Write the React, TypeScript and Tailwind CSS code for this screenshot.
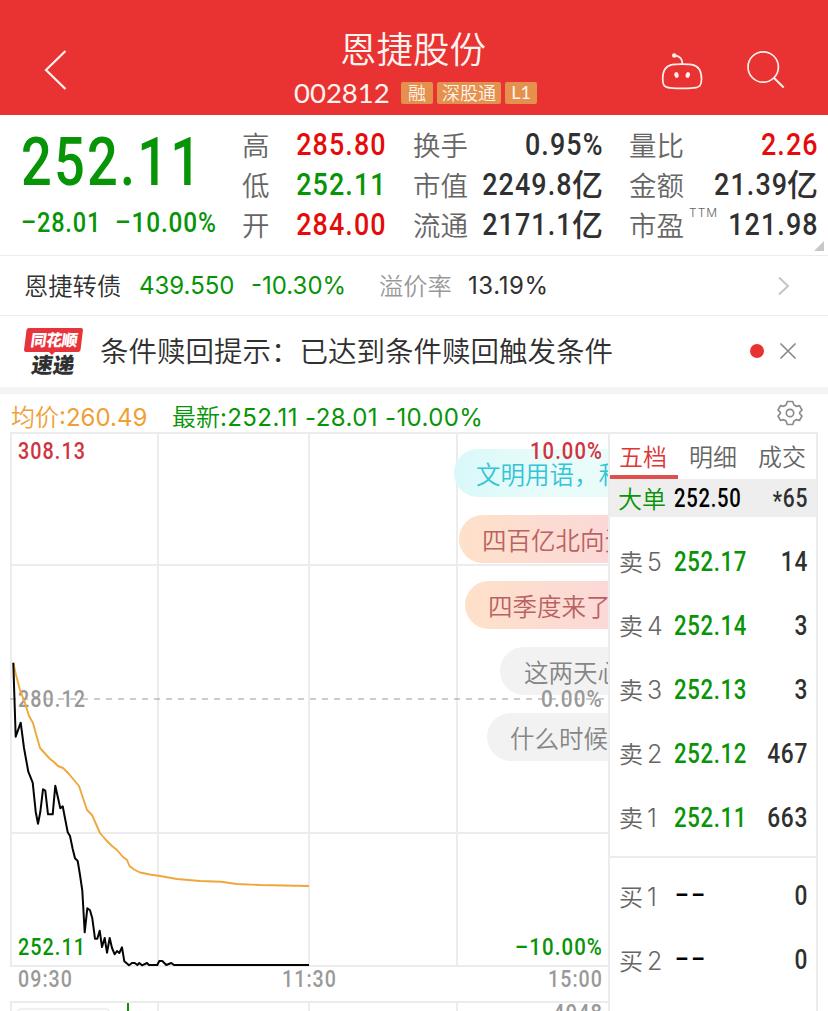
import clsx from "clsx";
import type { ReactNode } from "react";

const quoteColumns = [
  {
    className: "w-[144px]",
    rows: [
      { label: "高", value: "285.80", color: "text-[#e60b0b]" },
      { label: "低", value: "252.11", color: "text-[#079407]" },
      { label: "开", value: "284.00", color: "text-[#e60b0b]" },
    ],
  },
  {
    className: "ml-[27px] w-[190px]",
    rows: [
      { label: "换手", value: "0.95%", color: "text-[#303030]" },
      { label: "市值", value: "2249.8", unit: "亿", color: "text-[#303030]" },
      { label: "流通", value: "2171.1", unit: "亿", color: "text-[#303030]" },
    ],
  },
  {
    className: "ml-[26px] w-[189px]",
    rows: [
      { label: "量比", value: "2.26", color: "text-[#e60b0b]" },
      { label: "金额", value: "21.39", unit: "亿", color: "text-[#303030]" },
      { label: "市盈", sup: "TTM", value: "121.98", color: "text-[#303030]" },
    ],
  },
];

const asks = [
  { level: "5", price: "252.17", volume: "14" },
  { level: "4", price: "252.14", volume: "3" },
  { level: "3", price: "252.13", volume: "3" },
  { level: "2", price: "252.12", volume: "467" },
  { level: "1", price: "252.11", volume: "663" },
];

const bids = [
  { level: "1", volume: "0" },
  { level: "2", volume: "0" },
];

const comments = [
  {
    text: "文明用语，和谐交流",
    className:
      "ml-[444px] pl-[22px] bg-linear-to-r from-[#d9f8fa] to-[#eafcfa] to-[100px] text-[#31c5d6]",
  },
  {
    text: "四百亿北向资金",
    className:
      "ml-[449px] pl-[23px] bg-linear-to-r from-[#fee1c9] to-[#fbd8d8] to-[150px] text-[#b96262]",
  },
  {
    text: "四季度来了吗",
    className:
      "ml-[455px] pl-[23px] bg-linear-to-r from-[#fee1c9] to-[#fbd8d8] to-[150px] text-[#b96262]",
  },
  {
    text: "这两天心态",
    className: "ml-[490px] pl-6 bg-[#f2f2f2] text-[#858585]",
  },
  {
    text: "什么时候涨",
    className: "ml-[477px] pl-[23px] bg-[#f2f2f2] text-[#858585]",
  },
];

const axisLabels = [
  { x: 18, y: 459, width: 68, color: "#cf3340", text: "308.13" },
  { x: 18, y: 707, width: 68, color: "#999", text: "280.12" },
  { x: 18, y: 955, width: 68, color: "#079407", text: "252.11" },
  { x: 530, y: 459, width: 73, color: "#cf3340", text: "10.00%" },
  { x: 541, y: 707, width: 62, color: "#999", text: "0.00%" },
  { x: 515, y: 955, width: 88, color: "#079407", text: "–10.00%" },
  { x: 18, y: 987, width: 55, color: "#999", text: "09:30" },
  { x: 282, y: 987, width: 55, color: "#999", text: "11:30" },
  { x: 548, y: 987, width: 55, color: "#999", text: "15:00" },
  { x: 553, y: 1021, width: 50, color: "#999", text: "4048" },
];

const pricePoints =
  "13.3,662.7 15.7,736.7 20.7,722.7 24,748 28.3,771.7 32.7,782.7 35.7,811.7 38,823.7 40.3,812 43,789.3 45.3,790.7 48,814.3 52.7,814.3 55.3,785.7 60.3,808.3 62.7,806.3 67.7,832.3 70,836 72.7,849 75,858.3 77.7,861 80,875 82.3,890.7 84.7,932.3 87.3,908.3 90,910.3 92.3,918.3 95,938.7 97.3,938.7 99.7,930.7 102,947 104.7,938 107,952.7 109.7,938 112,948 114.7,954.3 117,951 119.3,953 122,947.3 124.3,961.3 129,965.3 132,963 134.7,963 137.3,965 139.3,963 142,965.3 147,963 149,965 157.3,965 159.3,961 162.3,961 166.3,965 171.3,963 174,965 309,965";

const averagePoints =
  "13.3,662.7 16,675 20,690 25,703 29,716 33,723 36,734 40,748 45,753.5 50,759 54,762 58,766 63,768 69,774 74,780 79,786 82,795 87,810 92,815 96,824 100,833 106,840 112,846 117,850 123,857 127,860 129.5,866 134,869.5 140,872.5 150,874.5 160,876 177,879 200,881 221,881.7 237,884 260,885 309,886";

function Num({
  children,
  className,
}: {
  children: ReactNode;
  className?: string;
}) {
  return (
    <span
      className={clsx(
        "inline-block shrink-0 whitespace-nowrap font-[Roboto,sans-serif] font-medium",
        className
      )}
    >
      {children}
    </span>
  );
}

function RobotIcon() {
  return (
    <svg
      className="h-11 w-11"
      viewBox="660 50 44 44"
      fill="none"
      stroke="#fff1ea"
      strokeWidth="1.7"
    >
      <path d="M672 64.7C675 64 689 64 692 64.7C698.5 66 701.5 72 701.5 79C701.5 85 700 87.3 694 87.9Q682 89 670 87.9C664 87.3 662.7 85 662.7 79C662.7 72 665.5 66 672 64.7Z" />
      <path d="M682.5 64.5C682.5 58.5 680 56 675 55.7" />
      <circle cx="674.3" cy="55.5" r="2.3" fill="#fff1ea" stroke="none" />
      <ellipse cx="676.5" cy="75" rx="2.1" ry="2.9" fill="#fff1ea" stroke="none" transform="rotate(-12 676.5 75)" />
      <ellipse cx="687.8" cy="75" rx="2.1" ry="2.9" fill="#fff1ea" stroke="none" transform="rotate(18 687.8 75)" />
    </svg>
  );
}

function Header() {
  return (
    <header className="flex h-[115px] shrink-0 bg-[#e93232] text-[#fff4ef]">
      <div className="w-[294px] pt-[49px] pl-[43px]">
        <svg className="h-[42px] w-6" viewBox="43 49 24 42" fill="none" stroke="currentColor" strokeWidth="2.2">
          <path d="M65.5 51L46 70L65.5 89" />
        </svg>
      </div>
      <div className="w-[366px] pt-[27px]">
        <h1 className="pl-[46px] text-[36.5px] leading-[42px]">恩捷股份</h1>
        <div className="mt-[10px] flex h-7 items-center">
          <span className="w-[107px] font-[Lato,sans-serif] text-[27.5px] leading-7 font-normal">
            002812
          </span>
          <div className="flex gap-1 text-[18px] leading-[21px]">
            <span className="h-[22px] w-8 rounded-[2px] bg-[#e3914d] text-center">融</span>
            <span className="h-[22px] w-16 rounded-[2px] bg-[#e3914d] text-center">深股通</span>
            <span className="h-[22px] w-8 rounded-[2px] bg-[#e3914d] text-center font-[Lato,sans-serif] font-normal">L1</span>
          </div>
        </div>
      </div>
      <div className="flex gap-[42px] pt-[50px]">
        <RobotIcon />
        <svg className="h-10 w-10" viewBox="746 50 40 40" fill="none" stroke="#fff1ea" strokeWidth="1.7">
          <circle cx="763.2" cy="67" r="15.2" />
          <path d="M773.5 77.5L783.7 87.5" strokeWidth="2" />
        </svg>
      </div>
    </header>
  );
}

function Quote() {
  return (
    <section className="relative flex h-[141px] shrink-0 border-b border-[#ececec] pl-[21px]">
      <div className="w-[221px] text-[#079407]">
        <Num className="mt-[15px] h-[66px] origin-left scale-x-[0.82] text-[66px] leading-[66px] tracking-[2.7px]">
          252.11
        </Num>
        <div className="mt-[12px] flex h-[30px] items-center text-[28px] leading-[30px] tracking-[1px]">
          <Num className="w-[94px] origin-left scale-x-[0.84]">–28.01</Num>
          <Num className="origin-left scale-x-[0.87]">–10.00%</Num>
        </div>
      </div>
      {quoteColumns.map((column, index) => (
        <div key={index} className={clsx("pt-[10px]", column.className)}>
          {column.rows.map((row) => (
            <div key={row.label} className="flex h-10 items-center">
              <span className="text-[27.5px] text-[#666]">{row.label}</span>
              {"sup" in row && (
                <sup className="-top-[12px] ml-[5px] font-[Inter,sans-serif] text-[12px] tracking-[1px] text-[#666]">
                  {row.sup}
                </sup>
              )}
              <span className={clsx("-mt-[3px] flex min-w-0 flex-1 items-center justify-end", row.color)}>
                <Num className="-mr-px -ml-8 origin-right scale-x-[0.84] text-[32px] tracking-[1.3px]">{row.value}</Num>
                {"unit" in row && (
                  <span className="text-[31px] font-medium">{row.unit}</span>
                )}
              </span>
            </div>
          ))}
        </div>
      ))}
      <span className="absolute right-[4px] bottom-[4px] h-[10px] w-[10px] bg-[#c8c8c8] [clip-path:polygon(100%_0,100%_100%,0_100%)]" />
    </section>
  );
}

function BondRow() {
  return (
    <section className="flex h-[60px] shrink-0 items-center border-b border-[#ececec] pl-6 text-[24.3px] text-[#303030]">
      <span className="w-[115px]">恩捷转债</span>
      <span className="w-[112px] font-[Inter,sans-serif] text-[24px] font-normal text-[#079407]">439.550</span>
      <span className="w-[128px] font-[Inter,sans-serif] text-[24px] font-normal text-[#079407]">-10.30%</span>
      <span className="w-[89px] text-[#999]">溢价率</span>
      <span className="font-[Inter,sans-serif] text-[24px] font-normal tracking-[0.6px]">13.19%</span>
      <svg className="ml-auto mr-9 h-6 w-4" viewBox="0 0 16 24" fill="none" stroke="#c4c4c4" strokeWidth="2">
        <path d="M3 3.5L12 12L3 20.5" />
      </svg>
    </section>
  );
}

function News() {
  return (
    <section className="flex h-[71px] shrink-0 items-center pl-[23px]">
      <svg className="h-[52px] w-[62px]" viewBox="23 325 62 52">
        <path d="M29 327H81Q83 327 83 329L80.5 349Q80 351 78 351H55L52 354L49 351H26Q24 351 24 349L26.5 329Q27 327 29 327Z" fill="#e8333a" />
        <g fontFamily="Noto Sans CJK SC, sans-serif" fontWeight="900">
          <text transform="translate(30 345) skewX(-8)" fontSize="16" textLength="47" fill="#fff">同花顺</text>
          <text transform="translate(30.5 372) skewX(-8)" fontSize="21.5" textLength="43" lengthAdjust="spacingAndGlyphs" fill="#303030">速递</text>
        </g>
      </svg>
      <span className="-mt-[2px] ml-[15px] text-[28.5px] text-[#303030]">
        条件赎回提示：已达到条件赎回触发条件
      </span>
      <span className="-mt-px ml-auto h-[14px] w-[14px] rounded-full bg-[#e93232]" />
      <svg className="-mt-px mr-[31px] ml-[15px] h-[18px] w-[18px]" viewBox="0 0 18 18" stroke="#8a8a8a" strokeWidth="1.7">
        <path d="M1.5 1.5L16.5 16.5M16.5 1.5L1.5 16.5" />
      </svg>
    </section>
  );
}

function Legend() {
  return (
    <section className="flex h-[38px] shrink-0 items-center pt-[8px] pl-[11px] text-[24px]">
      <span className="w-[161px] text-[#efa035]">
        均价<span className="font-[Inter,sans-serif] font-normal">:260.49</span>
      </span>
      <span className="text-[#079407]">
        最新
        <span className="font-[Inter,sans-serif] font-normal tracking-[0.4px]">
          :252.11 -28.01 -10.00%
        </span>
      </span>
      <svg className="-mt-[8px] mr-[25px] ml-auto h-[26px] w-[26px]" viewBox="0 0 26 26" fill="none" stroke="#8c8c8c" strokeWidth="1.7" strokeLinejoin="round">
        <path d="M10.3 1.5H15.7L17 5L19.3 6.3L22.5 5.6L25 10L22.7 12.3V13.7L25 16L22.5 20.4L19.3 19.7L17 21L15.7 24.5H10.3L9 21L6.7 19.7L3.5 20.4L1 16L3.3 13.7V12.3L1 10L3.5 5.6L6.7 6.3L9 5Z" />
        <circle cx="13" cy="13" r="3.7" />
      </svg>
    </section>
  );
}

function Chart() {
  return (
    <div className="relative ml-[10px] h-[579px] w-[598px] shrink-0 overflow-hidden">
      <svg className="absolute inset-0 h-[579px] w-[598px]" viewBox="10 432 598 579">
        <g stroke="#ececec" strokeWidth="2" fill="none">
          <path d="M10 433H608M10 565H608M10 833H608M10 966H608M10 1002H608" />
          <path d="M11 432V966M158 432V966M309 432V966M457 432V966" />
          <path d="M11 1002V1011M158 1002V1011M309 1002V1011M457 1002V1011" />
        </g>
      </svg>
      <div className="absolute top-[17px] left-0 flex w-[700px] flex-col gap-[18px]">
        {comments.map((comment) => (
          <div
            key={comment.text}
            className={clsx(
              "h-12 rounded-l-full text-[24.5px] leading-[49px] whitespace-nowrap",
              comment.className
            )}
          >
            {comment.text}
          </div>
        ))}
      </div>
      <svg className="absolute inset-0 h-[579px] w-[598px]" viewBox="10 432 598 579">
        <path d="M10 699H608" stroke="#999" strokeWidth="1.2" strokeDasharray="6 6" />
        <g fontFamily="Roboto, sans-serif" fontSize="24" fontWeight="500" letterSpacing="1.3">
          {axisLabels.map((label) => (
            <text
              key={label.text}
              x={label.x}
              y={label.y}
              textLength={label.width}
              lengthAdjust="spacingAndGlyphs"
              fill={label.color}
            >
              {label.text}
            </text>
          ))}
        </g>
        <polyline points={averagePoints} fill="none" stroke="#efa73b" strokeWidth="1.9" strokeLinejoin="round" />
        <polyline points={pricePoints} fill="none" stroke="#050505" strokeWidth="2" strokeLinejoin="round" />
        <path d="M128 1003V1011" stroke="#079407" strokeWidth="2" />
        <rect x="18" y="1009" width="91" height="20" rx="3" fill="none" stroke="#ececec" strokeWidth="1.5" />
      </svg>
    </div>
  );
}

function OrderBook() {
  return (
    <aside className="h-[579px] w-[210px] shrink-0 border-x-2 border-t-2 border-[#ececec] text-[24px]">
      <div className="flex h-[45px] items-stretch leading-[43px] text-[#666]">
        <span className="w-[68px] border-b-[4px] border-[#df4f4b] pl-[9px] text-[#de3535]">五档</span>
        <span className="w-[69px] pl-[11px]">明细</span>
        <span className="w-[69px] pl-[11px]">成交</span>
      </div>
      <div className="flex h-[38px] items-center bg-[#eee] pr-[8px] pl-[8px]">
        <span className="w-14 shrink-0 text-[#079407]">大单</span>
        <Num className="mt-[2px] origin-left scale-x-[0.81] text-[25px] tracking-[0.9px] text-black">252.50</Num>
        <Num className="mt-[2px] ml-auto origin-right scale-x-[0.84] text-[25px] tracking-[0.9px] text-[#303030]">
          <span className="relative top-[3px]">*</span>65
        </Num>
      </div>
      <div className="h-[341px] border-b-2 border-[#ececec] pt-[12px]">
        {asks.map((ask) => (
          <div key={ask.level} className="flex h-16 items-center pr-[8px] pl-[9px]">
            <span className="w-[28px] shrink-0 text-[#666]">卖</span>
            <span className="w-[27px] shrink-0 pt-[3px] font-[Inter,sans-serif] text-[25px] text-[#666]">{ask.level}</span>
            <Num className="mt-[3px] origin-left scale-x-[0.82] text-[27px] tracking-[0.8px] text-[#079407]">{ask.price}</Num>
            <Num className="mt-[3px] -ml-8 flex-1 origin-right scale-x-[0.84] text-right text-[27px] tracking-[0.8px] text-[#303030]">{ask.volume}</Num>
          </div>
        ))}
      </div>
      <div className="pt-[6px]">
        {bids.map((bid) => (
          <div key={bid.level} className="flex h-16 items-center pr-[8px] pl-[9px]">
            <span className="w-[28px] shrink-0 text-[#666]">买</span>
            <span className="w-[28px] shrink-0 pt-[3px] font-[Inter,sans-serif] text-[25px] text-[#666]">{bid.level}</span>
            <Num className="origin-left scale-x-[0.85] text-[25px] tracking-[3px] text-black">––</Num>
            <Num className="ml-auto origin-right scale-x-[0.84] text-[27px] tracking-[0.8px] text-[#303030]">{bid.volume}</Num>
          </div>
        ))}
      </div>
    </aside>
  );
}

export default function App() {
  return (
    <main className="flex h-[1011px] w-[828px] flex-col overflow-hidden bg-white font-['Noto_Sans_CJK_SC',sans-serif] font-[350]">
      <Header />
      <Quote />
      <BondRow />
      <News />
      <div className="h-[7px] shrink-0 bg-[#f4f4f4]" />
      <Legend />
      <section className="flex shrink-0">
        <Chart />
        <OrderBook />
      </section>
    </main>
  );
}
